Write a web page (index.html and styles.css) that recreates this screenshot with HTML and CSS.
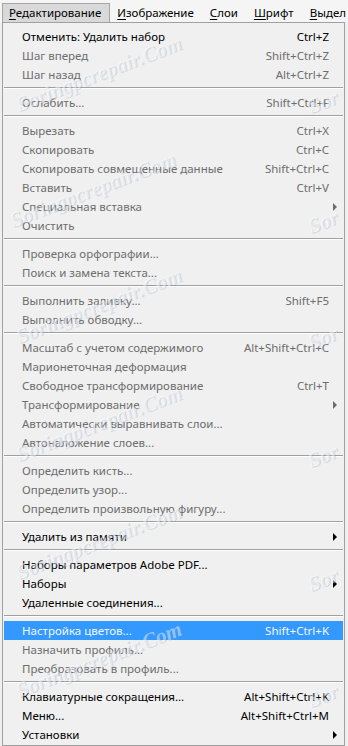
FILE: index.html
```html
<!DOCTYPE html>
<html lang="ru">
<head>
  <meta charset="UTF-8">
  <title>Редактирование</title>
  <link rel="stylesheet" href="styles.css">
</head>
<body>
  <div class="menubar">
    <span class="top active"><u>Р</u>едактирование</span>
    <span class="top"><u>И</u>зображение</span>
    <span class="top"><u>С</u>лои</span>
    <span class="top"><u>Ш</u>рифт</span>
    <span class="top last"><u>В</u>ыдел</span>
  </div>

  <div class="menu">
    <div class="item"><span class="label">Отменить: Удалить набор</span><span class="key">Ctrl+Z</span><span class="sub"></span></div>
    <div class="item off"><span class="label">Шаг вперед</span><span class="key">Shift+Ctrl+Z</span><span class="sub"></span></div>
    <div class="item off"><span class="label">Шаг назад</span><span class="key">Alt+Ctrl+Z</span><span class="sub"></span></div>
    <div class="sep"></div>
    <div class="item off"><span class="label">Ослабить...</span><span class="key">Shift+Ctrl+F</span><span class="sub"></span></div>
    <div class="sep"></div>
    <div class="item off"><span class="label">Вырезать</span><span class="key">Ctrl+X</span><span class="sub"></span></div>
    <div class="item off"><span class="label">Скопировать</span><span class="key">Ctrl+C</span><span class="sub"></span></div>
    <div class="item off"><span class="label">Скопировать совмещенные данные</span><span class="key">Shift+Ctrl+C</span><span class="sub"></span></div>
    <div class="item off"><span class="label">Вставить</span><span class="key">Ctrl+V</span><span class="sub"></span></div>
    <div class="item off"><span class="label">Специальная вставка</span><span class="key"></span><span class="sub arrow"></span></div>
    <div class="item off"><span class="label">Очистить</span><span class="key"></span><span class="sub"></span></div>
    <div class="sep"></div>
    <div class="item off"><span class="label">Проверка орфографии...</span><span class="key"></span><span class="sub"></span></div>
    <div class="item off"><span class="label">Поиск и замена текста...</span><span class="key"></span><span class="sub"></span></div>
    <div class="sep"></div>
    <div class="item off"><span class="label">Выполнить заливку...</span><span class="key">Shift+F5</span><span class="sub"></span></div>
    <div class="item off"><span class="label">Выполнить обводку...</span><span class="key"></span><span class="sub"></span></div>
    <div class="sep"></div>
    <div class="item off"><span class="label">Масштаб с учетом содержимого</span><span class="key">Alt+Shift+Ctrl+C</span><span class="sub"></span></div>
    <div class="item off"><span class="label">Марионеточная деформация</span><span class="key"></span><span class="sub"></span></div>
    <div class="item off"><span class="label">Свободное трансформирование</span><span class="key">Ctrl+T</span><span class="sub"></span></div>
    <div class="item off"><span class="label">Трансформирование</span><span class="key"></span><span class="sub arrow"></span></div>
    <div class="item off"><span class="label">Автоматически выравнивать слои...</span><span class="key"></span><span class="sub"></span></div>
    <div class="item off"><span class="label">Автоналожение слоев...</span><span class="key"></span><span class="sub"></span></div>
    <div class="sep"></div>
    <div class="item off"><span class="label">Определить кисть...</span><span class="key"></span><span class="sub"></span></div>
    <div class="item off"><span class="label">Определить узор...</span><span class="key"></span><span class="sub"></span></div>
    <div class="item off"><span class="label">Определить произвольную фигуру...</span><span class="key"></span><span class="sub"></span></div>
    <div class="sep"></div>
    <div class="item"><span class="label">Удалить из памяти</span><span class="key"></span><span class="sub arrow"></span></div>
    <div class="sep"></div>
    <div class="item"><span class="label">Наборы параметров Adobe PDF...</span><span class="key"></span><span class="sub"></span></div>
    <div class="item"><span class="label">Наборы</span><span class="key"></span><span class="sub arrow"></span></div>
    <div class="item"><span class="label">Удаленные соединения...</span><span class="key"></span><span class="sub"></span></div>
    <div class="sep"></div>
    <div class="item hover"><span class="label">Настройка цветов...</span><span class="key">Shift+Ctrl+K</span><span class="sub"></span></div>
    <div class="item off"><span class="label">Назначить профиль...</span><span class="key"></span><span class="sub"></span></div>
    <div class="item off"><span class="label">Преобразовать в профиль...</span><span class="key"></span><span class="sub"></span></div>
    <div class="sep"></div>
    <div class="item"><span class="label">Клавиатурные сокращения...</span><span class="key">Alt+Shift+Ctrl+K</span><span class="sub"></span></div>
    <div class="item"><span class="label">Меню...</span><span class="key">Alt+Shift+Ctrl+M</span><span class="sub"></span></div>
    <div class="item"><span class="label">Установки</span><span class="key"></span><span class="sub arrow"></span></div>

    <div class="watermarks">
      <span class="wm" style="left: 14px; top: 70px">Soringpcrepair.Com</span>
      <span class="wm" style="left: 306px; top: 72px">Sor</span>
      <span class="wm" style="left: 8px; top: 186px">Soringpcrepair.Com</span>
      <span class="wm" style="left: 306px; top: 192px">Sor</span>
      <span class="wm" style="left: 14px; top: 302px">Soringpcrepair.Com</span>
      <span class="wm" style="left: 306px; top: 308px">Sor</span>
      <span class="wm" style="left: 14px; top: 420px">Soringpcrepair.Com</span>
      <span class="wm" style="left: 306px; top: 426px">Sor</span>
      <span class="wm" style="left: 14px; top: 538px">Soringpcrepair.Com</span>
      <span class="wm" style="left: 306px; top: 550px">Sor</span>
      <span class="wm" style="left: 14px; top: 656px">Soringpcrepair.Com</span>
      <span class="wm" style="left: 306px; top: 666px">Sor</span>
    </div>
  </div>
</body>
</html>
```

FILE: styles.css
```css
html, body {
  margin: 0;
  padding: 0;
  overflow: hidden;
}
body {
  background-color: #f0f0f0;
  color: #000;
  font-family: 'Noto Sans', 'Open Sans', sans-serif;
  font-size: 11.5px;
  width: 348px;
  height: 746px;
}
.menubar {
  height: 22px;
  display: flex;
  align-items: flex-end;
  padding-left: 2px;
  background-color: #f5f5f5;
  white-space: nowrap;
}
.top {
  height: 18px;
  line-height: 18px;
  padding: 0 8px 0 6px;
  border: 1px solid transparent;
  border-bottom: 0;
}
.top.last {
  padding-right: 0;
}
.top u {
  text-decoration-thickness: 1px;
  text-underline-offset: 2px;
}
.top.active {
  background-color: #d9d9d9;
  border-color: #a5a5a5;
  position: relative;
  z-index: 2;
}
.menu {
  position: relative;
  margin-left: 2px;
  width: 341px;
  border: 1px solid #a0a0a0;
  background-color: #f0f0f0;
  padding: 4px 0 1px;
  overflow: hidden;
}
.item {
  display: flex;
  align-items: center;
  height: 19px;
  padding-left: 18px;
  margin: 0 1px;
  white-space: nowrap;
}
.item .label {
  flex: 1;
}
.item.off {
  color: #6d6d6d;
}
.item.hover {
  background-color: #3399ff;
  color: #f4f8fc;
}
.key {
  text-align: right;
}
.sub {
  width: 14px;
  height: 19px;
  display: flex;
  align-items: center;
  padding-left: 4px;
  box-sizing: border-box;
}
.sub.arrow::after {
  content: '';
  border-left: 4px solid #000;
  border-top: 4px solid transparent;
  border-bottom: 4px solid transparent;
}
.item.off .sub.arrow::after {
  border-left-color: #6d6d6d;
}
.sep {
  height: 1px;
  margin: 3px 1px 4px;
  background-color: #a0a0a0;
  border-bottom: 1px solid #ffffff;
}
.watermarks {
  position: absolute;
  inset: 0;
  pointer-events: none;
}
.wm {
  position: absolute;
  transform: rotate(-21deg);
  transform-origin: left center;
  font-family: 'Liberation Serif', serif;
  font-style: italic;
  font-weight: bold;
  font-size: 21px;
  color: rgba(255, 255, 255, 0.45);
  text-shadow: 1px 1px 0 rgba(120, 140, 175, 0.25);
  white-space: nowrap;
}
```
